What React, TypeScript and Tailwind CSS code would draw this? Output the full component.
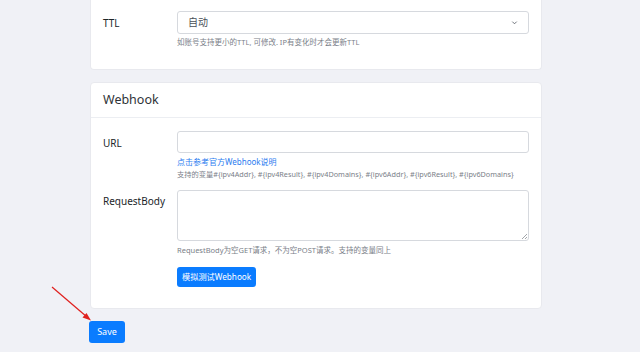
import React from "react"

const font = { fontFamily: '"Noto Sans", "Noto Sans CJK SC", sans-serif' }

const App = () => {
  return (
    <div className="h-[352px] w-[640px] overflow-hidden bg-[#f0f1f6] relative" style={font}>
      <div className="ml-[90px] w-[452px]">
        {/* tail of the previous card */}
        <div className="bg-white rounded-b-[4px] border border-t-0 border-[#e8e9ee] h-[71px] -mt-px">
          <div className="flex pt-[12px] px-[12px]">
            <div className="w-[74px] text-[10px] text-[#212529] pt-[5px]">TTL</div>
            <div className="flex-1">
              <div className="h-[23px] border border-[#d6d9de] rounded-[3px] flex items-center justify-between px-[10px] text-[10px] text-[#495057]">
                <span>自动</span>
                <svg width="7" height="7" viewBox="0 0 16 16" fill="none" stroke="#5a6068" strokeWidth="2">
                  <path d="M3 6l5 5 5-5" />
                </svg>
              </div>
              <div className="mt-[3px] text-[7.5px] text-[#7a8088]">
                如账号支持更小的TTL, 可修改. IP有变化时才会更新TTL
              </div>
            </div>
          </div>
        </div>

        {/* webhook card */}
        <div className="mt-[12px] bg-white rounded-[4px] border border-[#e8e9ee] h-[227px]">
          <div className="h-[35px] border-b border-[#eceef2] px-[12px] flex items-center text-[12.5px] text-[#2f3338]">
            Webhook
          </div>
          <div className="px-[12px] pt-[13px]">
            <div className="flex">
              <div className="w-[74px] text-[10px] text-[#212529] pt-[5px]">URL</div>
              <div className="flex-1">
                <div className="h-[22px] border border-[#d6d9de] rounded-[3px]" />
                <div className="mt-[3px] text-[8px] leading-[12px] text-[#2a7cf0]">点击参考官方Webhook说明</div>
                <div className="text-[7.25px] leading-[12px] text-[#7a8088]">
                  支持的变量#{"{"}ipv4Addr{"}"}, #{"{"}ipv4Result{"}"}, #{"{"}ipv4Domains{"}"}, #{"{"}ipv6Addr{"}"}, #{"{"}ipv6Result{"}"}, #{"{"}ipv6Domains{"}"}
                </div>
              </div>
            </div>
            <div className="flex mt-[10px]">
              <div className="w-[74px] text-[10px] text-[#212529] pt-[4px]">RequestBody</div>
              <div className="flex-1">
                <div className="h-[51px] border border-[#d6d9de] rounded-[3px] relative">
                  <svg className="absolute right-[1px] bottom-[1px]" width="6" height="6" viewBox="0 0 6 6" stroke="#8a8f96" strokeWidth="0.8">
                    <path d="M6 1L1 6M6 4L4 6" />
                  </svg>
                </div>
                <div className="mt-[3px] text-[7.5px] leading-[12px] text-[#7a8088]">
                  RequestBody为空GET请求，不为空POST请求。支持的变量同上
                </div>
                <button className="mt-[11px] h-[20px] px-[5px] rounded-[3px] bg-[#0a7cff] text-white text-[8.2px] flex items-center">
                  模拟测试Webhook
                </button>
              </div>
            </div>
          </div>
        </div>

        <button className="mt-[12px] -ml-px w-[36px] h-[22px] rounded-[3px] bg-[#0a7cff] text-white text-[9px] flex items-center justify-center">
          Save
        </button>
      </div>

      {/* red annotation arrow */}
      <svg className="absolute left-0 top-0 pointer-events-none" width="640" height="352">
        <line x1="52" y1="287" x2="87" y2="317" stroke="#e0201e" strokeWidth="1.2" />
        <path d="M91 320.5L82.5 317.5L86.5 313Z" fill="#e0201e" />
      </svg>
    </div>
  )
}

export default App
